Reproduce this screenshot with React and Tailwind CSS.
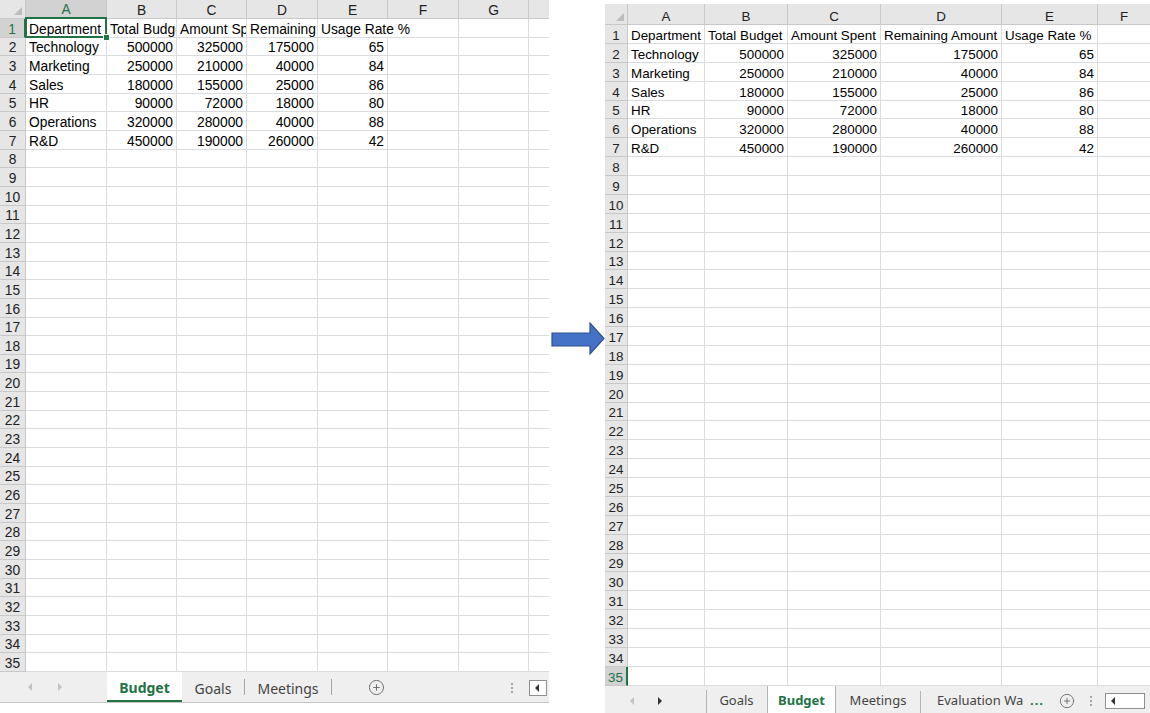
import React from 'react';
import { CirclePlus } from 'lucide-react';

const data = [
  ['Department', 'Total Budget', 'Amount Spent', 'Remaining Amount', 'Usage Rate %'],
  ['Technology', '500000', '325000', '175000', '65'],
  ['Marketing', '250000', '210000', '40000', '84'],
  ['Sales', '180000', '155000', '25000', '86'],
  ['HR', '90000', '72000', '18000', '80'],
  ['Operations', '320000', '280000', '40000', '88'],
  ['R&D', '450000', '190000', '260000', '42'],
];

const leftCols = [
  { l: 'A', w: 'w-[81px]' },
  { l: 'B', w: 'w-[70px]' },
  { l: 'C', w: 'w-[70px]' },
  { l: 'D', w: 'w-[71px]' },
  { l: 'E', w: 'w-[70px]' },
  { l: 'F', w: 'w-[71px]' },
  { l: 'G', w: 'w-[70px]' },
  { l: '', w: 'w-[21px]' },
];

const rightCols = [
  { l: 'A', w: 'w-[77px]' },
  { l: 'B', w: 'w-[83px]' },
  { l: 'C', w: 'w-[93px]' },
  { l: 'D', w: 'w-[121px]' },
  { l: 'E', w: 'w-[96px]' },
  { l: 'F', w: 'w-[53px]' },
];

const Tri = ({ dir, dark }) => (
  <span
    className={
      dir === 'left'
        ? `w-0 h-0 border-y-[4px] border-y-transparent border-r-[4px] ${dark ? 'border-r-[#333]' : 'border-r-[#c2c2c2]'}`
        : `w-0 h-0 border-y-[4px] border-y-transparent border-l-[4px] ${dark ? 'border-l-[#333]' : 'border-l-[#c2c2c2]'}`
    }
  />
);

const Dots = () => (
  <div className="flex flex-col gap-[2px]">
    <span className="w-[2px] h-[2px] bg-[#a6a6a6]" />
    <span className="w-[2px] h-[2px] bg-[#a6a6a6]" />
    <span className="w-[2px] h-[2px] bg-[#a6a6a6]" />
  </div>
);

const ScrollBox = ({ className }) => (
  <div className={`h-[16px] border border-[#8f8f8f] bg-white flex items-center pl-[5px] ${className}`}>
    <Tri dir="left" dark />
  </div>
);

// cells sit text on the bottom edge, like a spreadsheet does by default
function Grid({ cols, rh, headH, rowH, text, selA1, selRow, spill }) {
  return (
    <div className={`flex flex-col leading-[15px] ${text}`}>
      {/* column letters */}
      <div className={`flex ${headH}`}>
        <div className={`${rh} shrink-0 relative bg-[#e6e6e6] border-r border-b border-[#c8c8c8]`}>
          <span className="absolute right-[3px] bottom-[3px] w-0 h-0 border-l-[8px] border-l-transparent border-b-[8px] border-b-[#bdbdbd]" />
        </div>
        {cols.map((c, i) => (
          <div
            key={c.w + i}
            className={`${c.w} shrink-0 flex items-end justify-center border-r ${
              selA1 && i === 0
                ? 'bg-[#d2d2d2] text-[#217346] border-b-2 border-b-[#217346] border-r-[#c8c8c8]'
                : 'bg-[#e6e6e6] text-[#222] border-b border-[#c8c8c8]'
            }`}
          >
            {c.l}
          </div>
        ))}
      </div>

      {Array.from({ length: 35 }, (_, r) => {
        const row = data[r];
        const hl = (selA1 && r === 0) || selRow === r;
        return (
          <div key={r} className={`flex ${rowH}`}>
            <div
              className={`${rh} shrink-0 flex items-end justify-center border-b ${
                hl
                  ? 'bg-[#d2d2d2] text-[#217346] border-r-2 border-r-[#217346] border-b-[#c8c8c8]'
                  : 'bg-[#e6e6e6] text-[#222] border-r border-[#c8c8c8]'
              }`}
            >
              {r + 1}
            </div>
            {cols.map((c, i) => {
              const val = row ? row[i] : undefined;
              const num = r > 0 && i > 0;
              const overflowing = spill && r === 0 && i === 4;
              const sel = selA1 && r === 0 && i === 0;
              return (
                <div
                  key={c.w + i}
                  className={`${c.w} shrink-0 relative flex items-end px-[3px] whitespace-nowrap text-black border-b border-[#dadcdd] ${
                    overflowing || sel ? 'overflow-visible' : 'overflow-hidden'
                  } ${overflowing ? 'border-r-0' : 'border-r'} ${num ? 'justify-end' : 'justify-start'}`}
                >
                  {val !== undefined && <span className="relative z-[1]">{val}</span>}
                  {sel && (
                    <>
                      <span className="absolute left-[-1px] top-[-2px] right-[-1px] bottom-[-1px] border-2 border-[#217346] z-10" />
                      <span className="absolute right-[-4px] bottom-[-4px] w-[7px] h-[7px] bg-[#217346] border border-white z-10" />
                    </>
                  )}
                </div>
              );
            })}
          </div>
        );
      })}
    </div>
  );
}

function LeftTabs() {
  return (
    <div className="h-[31px] flex items-stretch bg-[#efefef] border-b border-[#c6c6c6] font-['Noto_Sans',sans-serif] text-[14px] text-[#444]">
      <div className="w-[107px] shrink-0 flex items-center gap-[26px] pl-[28px]">
        <Tri dir="left" />
        <Tri dir="right" />
      </div>
      <div className="w-[75px] shrink-0 bg-white flex items-center justify-center pt-[3px] font-bold text-[#217346] border-b-2 border-[#217346]">
        Budget
      </div>
      <div className="w-[62px] shrink-0 flex items-center justify-center pt-[3px]">Goals</div>
      <div className="w-px my-[7px] bg-[#a6a6a6]" />
      <div className="w-[86px] shrink-0 flex items-center justify-center pt-[3px]">Meetings</div>
      <div className="w-px my-[7px] bg-[#a6a6a6]" />
      <div className="w-[88px] shrink-0 flex items-center justify-center pt-[2px]">
        <CirclePlus size={17} strokeWidth={1.4} color="#707070" />
      </div>
      <div className="flex-1 flex items-center justify-end pr-[16px] pt-[2px]">
        <Dots />
      </div>
      <div className="w-[20px] shrink-0 flex items-center pt-[2px]">
        <ScrollBox className="w-[18px]" />
      </div>
    </div>
  );
}

function RightTabs() {
  return (
    <div className="h-[27px] flex items-stretch bg-[#efefef] font-['Noto_Sans',sans-serif] text-[13px] text-[#444]">
      <div className="w-[101px] shrink-0 flex items-center gap-[24px] pl-[25px] pt-[3px]">
        <Tri dir="left" />
        <Tri dir="right" dark />
      </div>
      <div className="w-[61px] shrink-0 flex items-center justify-center pt-[3px] relative">
        <span className="absolute left-0 top-[4px] bottom-0 w-px bg-[#b4b4b4]" />
        Goals
      </div>
      <div className="w-[69px] shrink-0 bg-white border-x border-[#b4b4b4] flex items-center justify-center pt-[3px] font-bold text-[#217346]">
        Budget
      </div>
      <div className="w-[84px] shrink-0 flex items-center justify-center pt-[3px]">Meetings</div>
      <div className="w-px mt-[5px] bg-[#b4b4b4]" />
      <div className="w-[104px] shrink-0 flex items-center pl-[16px] pt-[3px] whitespace-nowrap">
        Evaluation Wa
      </div>
      <div className="w-[30px] shrink-0 flex items-center pl-[5px] pt-[3px] font-bold text-[#217346] tracking-[1px]">...</div>
      <div className="w-[24px] shrink-0 flex items-center justify-center pt-[3px]">
        <CirclePlus size={16} strokeWidth={1.4} color="#707070" />
      </div>
      <div className="w-[24px] shrink-0 flex items-center justify-center pt-[3px]">
        <Dots />
      </div>
      <div className="flex-1 flex items-center pl-[2px] pt-[3px]">
        <ScrollBox className="w-[40px]" />
      </div>
    </div>
  );
}

export default function App() {
  return (
    <div className="w-[1150px] h-[713px] bg-white flex items-start overflow-hidden font-['Liberation_Sans',Arial,sans-serif]">
      {/* before */}
      <div className="w-[549px] shrink-0 overflow-hidden">
        <Grid
          cols={leftCols}
          rh="w-[26px]"
          headH="h-[19px]"
          rowH="h-[18.66px]"
          text="text-[13.8px]"
          selA1
          spill
        />
        <LeftTabs />
      </div>

      {/* arrow */}
      <div className="w-[56px] shrink-0 pt-[322px]">
        <svg width="56" height="34" viewBox="0 0 56 34">
          <polygon
            points="3,11 41,11 41,1 55,16.5 41,32 41,24 3,24"
            fill="#4472c4"
            stroke="#2f528f"
            strokeWidth="1.2"
          />
        </svg>
      </div>

      {/* after */}
      <div className="w-[545px] shrink-0 mt-[4px] overflow-hidden">
        <Grid
          cols={rightCols}
          rh="w-[23px]"
          headH="h-[21px]"
          rowH="h-[18.89px]"
          text="text-[13.4px]"
          selRow={34}
        />
        <RightTabs />
      </div>
    </div>
  );
}
